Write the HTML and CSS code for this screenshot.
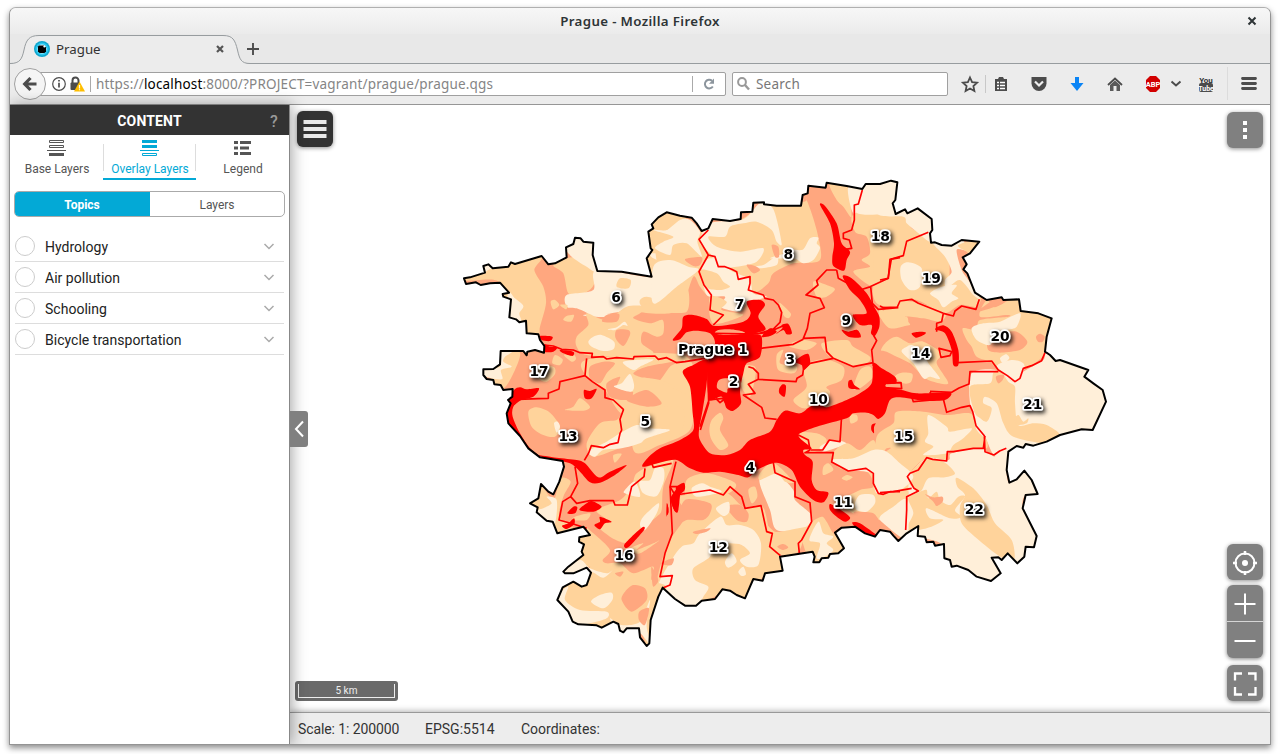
FILE: index.html
```html
<!DOCTYPE html>
<html lang="en">
<head>
<meta charset="utf-8">
<title>Prague</title>
<link rel="stylesheet" href="styles.css">
</head>
<body>
<div class="window">
  <header class="titlebar"><span class="window-title">Prague - Mozilla Firefox</span>
    <svg class="window-close" width="10" height="10" viewBox="0 0 10 10"><path d="M1.5 1.5l7 7M8.500 1.500l-7 7" stroke="#2e3436" stroke-width="2"/></svg>
  </header>
  <div class="tabs">
    <svg class="tab-shape" width="250" height="31" viewBox="0 0 250 31"><path d="M0 29.500C10 29.500 12 25 14 16C16 6 19 1.500 29 1.500H213C223 1.500 225 6 227.500 16C229.500 25 231 29.500 240 29.500H250V31H0z" fill="#ececec"/><path d="M0 29.500C10 29.500 12 25 14 16C16 6 19 1.500 29 1.500H213C223 1.500 225 6 227.500 16C229.500 25 231 29.500 240 29.500H250" fill="none" stroke="#979c9f"/></svg>
    <div class="tab">
      <svg width="16" height="16" viewBox="0 0 16 16"><circle cx="8" cy="8" r="8" fill="#0fa6cd"/><circle cx="8" cy="8" r="6.500" fill="#2cc8f0"/><circle cx="8" cy="8" r="4.500" fill="#e8f8fc"/><path d="M5 4.500h5l2 2v4l-1.500 1.500H5.500L4 10.500v-5z" fill="#000"/><circle cx="10.300" cy="5.500" r="1" fill="#fff"/></svg>
      <span class="tab-name">Prague</span>
      <svg width="8" height="8" viewBox="0 0 8 8"><path d="M1 1l6 6M7 1l-6 6" stroke="#555" stroke-width="2.200"/></svg>
    </div>
    <svg class="new-tab" width="12" height="12" viewBox="0 0 12 12"><path d="M6 0v12M0 6h12" stroke="#4c4c4c" stroke-width="1.900"/></svg>
  </div>
  <div class="toolbar">
    <div class="back"><svg width="16" height="16" viewBox="0 0 16 16"><path d="M14.500 8H3.500M8.500 2L2.700 8l5.800 6" fill="none" stroke="#4c4c4c" stroke-width="3.200"/></svg></div>
    <div class="address">
      <svg width="34" height="16" viewBox="0 0 34 16"><circle cx="7" cy="8" r="6.300" fill="none" stroke="#4c4c4c" stroke-width="1.200"/><path d="M7 6.800v4.700M7 4v1.500" stroke="#4c4c4c" stroke-width="1.700"/><path d="M20.500 7V4.500a3 3 0 0 1 6 0V7" fill="none" stroke="#4c4c4c" stroke-width="2"/><rect x="18.500" y="6.500" width="9" height="7.500" rx="1" fill="#4c4c4c"/><path d="M27.500 5.500L33 15.500H22z" fill="#ffbf00"/><path d="M27.500 9v3.500M27.500 13.300v1" stroke="#fff" stroke-width="1.200"/></svg>
      <span class="address-text">https://<b>localhost</b>:8000/?PROJECT=vagrant/prague/prague.qgs</span>
      <svg class="reload" width="12" height="12" viewBox="0 0 12 12"><path d="M9.800 8.500A4.300 4.300 0 1 1 9 2.800" fill="none" stroke="#8c959d" stroke-width="2"/><path d="M11 .5v5.300H6z" fill="#8c959d"/></svg>
    </div>
    <div class="search"><svg width="13" height="14" viewBox="0 0 13 14"><circle cx="5" cy="5" r="3.900" fill="none" stroke="#999" stroke-width="2"/><path d="M8 8l4 4.500" stroke="#999" stroke-width="2.400"/></svg><span>Search</span></div>
    <svg class="tools" width="305" height="40" viewBox="955 64 305 40">
      <path d="M970 77.500l2.100 4.600 5 .6-3.700 3.400 1 4.900-4.400-2.500-4.400 2.500 1-4.900-3.700-3.400 5-.6z" fill="none" stroke="#4c4c4c" stroke-width="1.800"/>
      <path d="M985.500 75v18" stroke="#c8c8c8"/>
      <path d="M995 79h3l1-2h4l1 2h3v12h-12z" fill="#4c4c4c"/><path d="M997 82.500h2M1000 82.500h5M997 85.500h2M1000 85.500h5M997 88.500h2M1000 88.500h5" stroke="#fff" stroke-width="1.300"/>
      <path d="M1031.500 77h15v6.500a7.500 7.500 0 0 1-15 0z" fill="#4c4c4c"/><path d="M1035 81.500l4 4 4-4" fill="none" stroke="#eee" stroke-width="2.200"/>
      <path d="M1075 77h4v6h4.500l-6.500 8-6.500-8h4.500z" fill="#0a84f5"/>
      <path d="M1108 85l7-6.500 7 6.500" fill="none" stroke="#4c4c4c" stroke-width="1.800"/><path d="M1110 85l5-4.500 5 4.500v6h-3.500v-5h-3v5h-3.500z" fill="#5a5a5a"/>
      <path d="M1150 76h6l4 4v8l-4 4h-6l-4-4v-8z" fill="#d20000"/><text x="1153" y="87" class="abp" text-anchor="middle">ABP</text>
      <path d="M1171.500 81.500l4.500 4 4.500-4" fill="none" stroke="#4c4c4c" stroke-width="2"/>
      <text x="1206" y="82.500" class="you" text-anchor="middle">You</text><rect x="1199" y="83" width="14" height="9" rx="2" fill="#4c4c4c"/><text x="1206" y="90.500" class="tube" text-anchor="middle">Tube</text>
      <path d="M1227.500 67v33" stroke="#dcdcdc"/>
      <path d="M1242.500 78.500h13M1242.500 83.500h13M1242.500 88.500h13" stroke="#4c4c4c" stroke-width="2.800" stroke-linecap="round"/>
    </svg>
  </div>
  <main class="content">
    <aside class="sidebar">
      <div class="heading"><strong>CONTENT</strong><span class="help">?</span></div>
      <nav class="modes">
        <div class="mode"><svg width="20" height="18" viewBox="0 0 20 18"><path d="M2.500 1.500h14v2h-14zM2.500 6.500h14v2h-14z" fill="none" stroke="#555"/><path d="M0 11.500h19" stroke="#555"/><path d="M2 14h15v3H2z" fill="#555"/></svg><span>Base Layers</span></div>
        <div class="mode active"><svg width="20" height="18" viewBox="0 0 20 18"><path d="M2 1h15v3H2zM2 6h15v3H2z" fill="#03a9d6"/><path d="M0 11.500h19M2.500 14.500h14v2h-14z" fill="none" stroke="#03a9d6"/></svg><span>Overlay Layers</span></div>
        <div class="mode"><svg width="20" height="18" viewBox="0 0 20 18"><path d="M1 2h4v3H1zM1 7.500h4v3H1zM1 13h4v3H1zM7 2h11v3H7zM7 7.500h9v3H7zM7 13h11v3H7z" fill="#555"/></svg><span>Legend</span></div>
      </nav>
      <div class="switch"><div class="switch-item selected">Topics</div><div class="switch-item">Layers</div></div>
      <ul class="topics">
        <li><i class="radio"></i><span>Hydrology</span><svg width="12" height="8" viewBox="0 0 12 8"><path d="M1.500 2l4.500 4.500 4.500-4.500"/></svg></li>
        <li><i class="radio"></i><span>Air pollution</span><svg width="12" height="8" viewBox="0 0 12 8"><path d="M1.500 2l4.500 4.500 4.500-4.500"/></svg></li>
        <li><i class="radio"></i><span>Schooling</span><svg width="12" height="8" viewBox="0 0 12 8"><path d="M1.500 2l4.500 4.500 4.500-4.500"/></svg></li>
        <li><i class="radio"></i><span>Bicycle transportation</span><svg width="12" height="8" viewBox="0 0 12 8"><path d="M1.500 2l4.500 4.500 4.500-4.500"/></svg></li>
      </ul>
    </aside>
    <section class="map-column">
      <div class="map">
        <svg class="city" width="680" height="480" viewBox="0 0 2040 1440">
          <defs><clipPath id="city-clip"><use href="#outline"/></clipPath></defs>
          <g clip-path="url(#city-clip)"><rect width="2040" height="1440" fill="#ffa77f"/><g id="zones"></g></g>
          <g class="borders">
            <path d="M313 525L340 528 365 538 400 540 420 548 457 550 455 562 490 560 500 567 530 563 580 567 582 560 645 558 655 568 680 563 710 578 735 575 795 565M440 565l-2 18-3 34-42 10-33 8-3 22-32 13v15l-30 1-60 2M435 617l22 18 38 25v23l25 7 30 28 0 2-10 28 5 32-5 10-6 28-24 5-20 10-36-6-8 22-13 22M405 890l8 50-21 40 18 20 40-8 70 0 5 13h37l13-55 37-30 3-25M392 980l-24 15-11 55 43 12 40 13M708 875l-18 75 7 140-22 60-15 70 37-3-7 28-20 8M690 950l28 0M635 880l5 12 55-12"/>
            <g transform="translate(660 0)"><path d="M145 180l-28 28 28 47 20 5 10 30 20 0 20 8 15 7 5 23 35-8 0 20-5 20 45 15 5 10 25 5 15 15 10 22-5 30-20 20-48 15-130-2M145 255l-28 50 15 40 22 30-4 45 40 15-30 30M607 60l-12 42-12 3v45l-8 30-25 10v15l18 5 7 25-20 3M530 300h-30l-30 32 4 13-36 30 42 10 13 28-43 17-8 45-12 30 65-3 5 43 20 20 60 25 60-12M530 300l5 25 65 35 32-10 5 50 18 18 60-5M630 350l55-25 5-57 30-5M430 508l-30 15-97 12M640 495l10 17-15 28 5 48M520 565l-70 15-20 20-2 15-17 10-3 10-113-7 0-18-15-15-15-5M295 628l-30 15 20 27-35 5 55 37 10 32 35 4M143 570l3 130-25 80M154 570l-6 120 40-5 10 15M160 498h70l35-4 60-7 45-20M590 680l30-5 35-50M590 680v25l-30 5"/></g>
            <g transform="translate(1320 0)"><path d="M145 187l-65 27-10 43-36 10-10 58-24 5M0 408l10 5 42-2 8-18 35-5 20 12 75 30 30 8 5-15 20-15 43 10 10-30M190 430l-5 25-15 5 0 25M177 535l38 10-5 12-27 5zM232 578l103-5 20 27 27 17 23 18 15-10 10-30 25-8 30-15 10-24M355 605l-85 0-3 37-30 12-22 13-65-3M150 665l3 10 60-5M20 640l43-2 2 18-55-3M95 680l5 15 90-8 10 40 45-15 25-5 8 18 10 42 25 30 2 48 27 10 17-12 20-8M315 798l-5 37-30 0-60 10-18 0-2 28-42-5-18-5-25 37-25 10-8 10 20 35 13 8-35 17 0 40-3 60M95 955l-55 10-40 3"/></g>
            <g transform="translate(660 690)"><path d="M720 275l-30 0-20 8-15-3-15-30 0-30-22-15-53 8-50-27 5-28-85 0 15-8-5-30-30-15M545 45l-5 80-32-5-20 30-35 0M340 188l5 30 60 27 0 45 45 18 5 57-30 55-10 10 3 30M30 260l15 25 105-15 40 15 20-25 35 30 10 35 48-8 17 78 17 5-8 40 32 27M120 80l25-75M190 0l-10 8-12-12"/></g>
          </g>
          <path id="outline" class="outline" d="M72 325L78 342 108 337 122 345 150 340 180 338 207 368 188 372 190 380 213 388 208 442 228 448 238 457 258 452 260 490 295 493 300 510 313 528 312 548 285 540 262 545 260 556 250 543 182 543 180 583 160 597 130 598 130 615 140 627 160 630 163 643 182 645 190 660 218 657 217 680 204 690 212 700 200 730 205 760 240 798 265 835 300 862 368 873 372 890 358 935 340 973 325 965 303 942 295 985 270 1000 293 1012 290 1027 320 1052 338 1055 352 1090 430 1070 450 1095 418 1102 417 1115 432 1123 425 1145 430 1155 385 1190 370 1205 375 1210 400 1210 440 1193 453 1208 440 1245 425 1250 400 1235 368 1252 352 1290 385 1325 398 1355 415 1363 470 1366 485 1373 520 1355 535 1362 540 1382 550 1387 560 1375 597 1375 600 1402 620 1428 628 1420 632 1350 655 1280 668 1253 705 1287 735 1307 768 1307 785 1292 825 1287 847 1258 870 1262 890 1275 915 1285 930 1250 940 1227 968 1232 975 1210 1028 1202 1020 1160 1118 1145 1124 1160 1120 1177 1138 1177 1145 1165 1165 1163 1170 1152 1195 1150 1212 1135 1185 1088 1205 1073 1245 1070 1275 1090 1305 1100 1320 1080 1350 1085 1360 1097 1375 1113 1400 1090 1435 1068 1433 1098 1455 1100 1460 1117 1480 1115 1485 1127 1512 1122 1513 1165 1530 1170 1535 1190 1550 1187 1585 1200 1610 1220 1653 1233 1682 1210 1655 1163 1675 1162 1685 1170 1703 1150 1732 1180 1753 1160 1757 1130 1782 1132 1790 1098 1748 1015 1757 975 1793 972 1775 930 1753 902 1730 928 1708 938 1700 900 1705 845 1730 828 1750 833 1757 822 1780 827 1820 815 1860 795 1925 778 1958 780 1998 695 1988 660 1960 640 1933 620 1945 600 1860 570 1847 573 1830 555 1815 545 1820 500 1835 445 1795 430 1742 423 1737 388 1690 390 1685 382 1640 390 1605 368 1582 310 1570 298 1580 283 1568 262 1590 250 1618 215 1565 210 1535 227 1505 225 1485 217 1473 218 1470 190 1477 180 1475 147 1433 115 1402 130 1395 118 1367 132 1358 100 1366 90 1372 37 1353 32 1320 42 1277 42 1267 57 1220 48 1160 38 1157 53 1105 47 1103 70 1088 75 1083 107 1010 107 972 103 972 97 940 98 937 125 903 127 902 147 870 153 818 147 805 175 785 183 770 160 755 143 720 137 680 127 655 142 635 163 640 175 625 185 632 235 637 240 620 265 635 320 545 305 472 303 458 255 460 218 430 215 422 205 405 203 400 222 378 232 380 262 345 280 325 283 305 258 225 282 213 277 205 290 158 295 145 283 130 288 135 308 90 322z"/>
          <g class="labels">
            <text x="528" y="396">6</text><text x="297" y="619">17</text><text x="1045" y="267">8</text><text x="1321" y="214">18</text><text x="1474" y="339">19</text><text x="899" y="417">7</text><text x="1219" y="465">9</text><text x="1680" y="513">20</text><text x="819" y="553">Prague 1</text><text x="1051" y="583">3</text><text x="1442" y="563">14</text><text x="881" y="648">2</text><text x="1135" y="703">10</text><text x="1778" y="718">21</text><text x="616" y="769">5</text><text x="384" y="812">13</text><text x="1391" y="813">15</text><text x="931" y="906">4</text><text x="1210" y="1011">11</text><text x="1603" y="1033">22</text><text x="835" y="1145">12</text><text x="552" y="1170">16</text>
          </g>
        </svg>
        <div class="map-button menu"><svg width="36" height="36" viewBox="0 0 36 36"><path d="M6.500 11h23M6.500 18h23M6.500 25h23" stroke="#e9e9e9" stroke-width="4"/></svg></div>
        <div class="collapse"><svg width="18" height="36" viewBox="0 0 18 36"><path d="M13 10.500L6 18l7 7.500" fill="none" stroke="#fff" stroke-width="2"/></svg></div>
        <div class="map-button more"><svg width="36" height="36" viewBox="0 0 36 36"><path d="M16 9h4v4h-4zM16 16h4v4h-4zM16 23h4v4h-4z" fill="#fff"/></svg></div>
        <div class="controls">
          <div class="map-button"><svg width="36" height="36" viewBox="0 0 36 36"><circle cx="18" cy="19" r="9.500" fill="none" stroke="#fff" stroke-width="2"/><circle cx="18" cy="19" r="3" fill="#fff"/><path d="M18 7v4M18 27v4M6 19h4M26 19h4" stroke="#fff" stroke-width="2.500"/></svg></div>
          <div class="zoom"><svg width="36" height="73" viewBox="0 0 36 73"><path d="M0 36.500h36" stroke="#d5d5d5"/><path d="M7.500 19h21M18 8.500v21M7.500 56h21" stroke="#fff" stroke-width="2"/></svg></div>
          <div class="map-button"><svg width="36" height="36" viewBox="0 0 36 36"><path d="M8 15.500V8.500h7M21 8.500h7.500v7M28.500 22v7.500H21M15 29.500H8V22" fill="none" stroke="#fff" stroke-width="2.300"/></svg></div>
        </div>
        <div class="scale"><div class="scale-line">5 km</div></div>
      </div>
      <footer class="status"><span class="st-scale">Scale: 1: 200000</span><span class="st-epsg">EPSG:5514</span><span>Coordinates:</span></footer>
    </section>
  </main>
</div>
<script src="map.js"></script>
</body>
</html>
```
FILE: styles.css
```css
* { box-sizing: border-box; }
body { margin: 0; height: 754px; padding: 7px 9px 9px; background: #fff; overflow: hidden; font-family: Roboto, sans-serif; color: #222; }
svg { display: block; flex: none; }
.window { width: 1262px; height: 738px; border: 1px solid #949494; border-top-color: #b0b0b0; border-radius: 7px 7px 0 0; overflow: hidden; display: flex; flex-direction: column; box-shadow: 0 3px 6px rgba(0,0,0,.45); background: #ececec; }
.titlebar { position: relative; height: 26px; flex: none; background: linear-gradient(#f7f7f7, #ebebeb); display: flex; align-items: center; justify-content: center; font: 600 13.3px "Noto Sans", sans-serif; color: #2e3436; }
.window-title { letter-spacing: .35px; }
.window-close { position: absolute; right: 13px; top: 8px; }
.tabs { position: relative; height: 30px; flex: none; background: #e8e8e8; border-bottom: 1px solid #979c9f; display: flex; align-items: center; font: 13.3px "Noto Sans", sans-serif; color: #333; }
.tab-shape { position: absolute; left: 0; top: 0; }
.tab { position: relative; display: flex; align-items: center; width: 236px; padding-left: 24px; padding-right: 22px; padding-top: 1px; }
.tab-name { margin-left: 6px; flex: 1; }
.new-tab { position: relative; margin: 1px 0 0 1px; }
.toolbar { height: 41px; flex: none; border-bottom: 1px solid #969696; display: flex; align-items: center; font: 13.5px "Noto Sans", sans-serif; }
.back { position: relative; z-index: 1; width: 32px; height: 32px; margin-left: 4px; border: 1px solid #a0a0a0; border-radius: 50%; background: #f5f5f5; display: flex; align-items: center; justify-content: center; flex: none; }
.address { margin-left: -7px; width: 687px; height: 24px; border: 1px solid #a0a0a0; border-radius: 2px; background: #fff; display: flex; align-items: center; padding-left: 12px; flex: none; }
.address-text { margin-left: 4px; width: 603px; height: 16px; border-left: 1px solid #aaa; border-right: 1px solid #aaa; display: flex; align-items: center; padding-left: 5px; color: #858585; white-space: nowrap; letter-spacing: .17px; }
.address-text b { color: #000; font-weight: 400; }
.reload { margin-left: 10px; }
.search { margin-left: 6px; width: 216px; height: 24px; border: 1px solid #a0a0a0; border-radius: 2px; background: #fff; display: flex; align-items: center; padding-left: 4px; gap: 6px; color: #777; flex: none; font-size: 13.5px; letter-spacing: .2px; }
.tools { margin-left: 7px; }
.abp { font: 700 7.500px Roboto, sans-serif; fill: #fff; }
.you { font: 700 8px Roboto, sans-serif; fill: #333; }
.tube { font: 700 7px Roboto, sans-serif; fill: #fff; }
.content { flex: 1; display: flex; min-height: 0; background: #fff; }
.sidebar { position: relative; z-index: 2; width: 280px; flex: none; background: #fff; border-right: 1px solid #888; box-shadow: 2px 0 14px rgba(0,0,0,.35); }
.heading { position: relative; height: 30px; background: #333; color: #fff; display: flex; align-items: center; justify-content: center; font-size: 14px; padding-top: 2px; letter-spacing: .15px; }
.help { position: absolute; right: 11px; color: #999; font-size: 16px; font-weight: 500; }
.modes { display: flex; height: 45px; }
.mode { position: relative; width: 93px; flex: 1; display: flex; flex-direction: column; align-items: center; padding-top: 4px; font-size: 12px; color: #555; gap: 5px; white-space: nowrap; }
.mode span { line-height: 14px; padding-left: 1px; }
.mode.active { color: #03a9d6; background: linear-gradient(#ddd, #ddd) 0 9px / 1px 27px no-repeat, linear-gradient(#ddd, #ddd) 100% 9px / 1px 27px no-repeat; border-bottom: 2px solid #03a9d6; }
.switch { margin: 11px 4px 0; height: 26px; display: flex; border: 1px solid #aaa; border-radius: 5px; overflow: hidden; font-size: 12px; color: #555; }
.switch-item { flex: 1; display: flex; align-items: center; justify-content: center; padding-top: 1px; }
.switch-item.selected { flex: 0 0 136px; background: #03a9d6; color: #fff; font-weight: 700; margin: -1px 0 -1px -1px; }
.topics { list-style: none; margin: 14px 5px 0; padding: 0; font-size: 14px; letter-spacing: .02px; }
.topics li { height: 31px; border-bottom: 1px solid #ddd; display: flex; align-items: center; padding-right: 9px; }
.topics span { flex: 1; margin-left: 10px; padding-top: 1px; }
.radio { width: 20px; height: 20px; border: 1px solid #ccc; border-radius: 50%; }
.topics path { fill: none; stroke: #aaa; stroke-width: 1.500; }
.map-column { flex: 1; min-width: 0; display: flex; flex-direction: column; }
.map { position: relative; flex: 1; background: #fff; }
.city { position: absolute; left: 150px; top: 65px; }
.outline { fill: none; stroke: #000; stroke-width: 6; stroke-linejoin: round; }
.borders { fill: none; stroke: #f00; stroke-width: 5; stroke-linejoin: round; }
.labels { font: 700 41.500px "DejaVu Sans", sans-serif; text-anchor: middle; fill: #000; stroke: #fff; stroke-width: 11; stroke-linejoin: round; paint-order: stroke; filter: drop-shadow(6px 7px 6px rgba(0,0,0,.85)); }
.map-button { width: 36px; height: 36px; background: #808080; border-radius: 6px; box-shadow: 0 1px 4px rgba(0,0,0,.45); }
.menu { position: absolute; left: 7px; top: 6px; background: #333; }
.more { position: absolute; right: 7px; top: 7px; }
.collapse { position: absolute; left: 0; top: 306px; width: 18px; height: 36px; z-index: 3; background: #808080; border-radius: 0 3px 3px 0; }
.controls { position: absolute; right: 7px; top: 439px; display: flex; flex-direction: column; gap: 5px; }
.zoom { height: 73px; margin-bottom: 2px; background: #808080; border-radius: 6px; box-shadow: 0 1px 4px rgba(0,0,0,.5); }
.scale { position: absolute; left: 5px; top: 576px; width: 103px; height: 20px; background: #6a6a6a; border-radius: 3px; padding: 3px; }
.scale-line { height: 14px; border: 1px solid #eee; border-top: 0; color: #eee; font-size: 10px; line-height: 13px; text-align: center; }
.status { position: relative; height: 32px; flex: none; border-top: 1px solid #999; background: #ededed; box-shadow: 0 -1px 6px rgba(0,0,0,.3); display: flex; align-items: center; padding: 1px 0 0 8px; font-size: 14px; color: #333; }
.st-scale { width: 127px; letter-spacing: -.1px; }
.st-epsg { width: 96px; }
```
FILE: map.js
```js
// Land-use zones: t = tan, c = cream, s = salmon, r = red.
// Each sheet has an origin and a list of closed rings, smoothed when drawn.
const colors = { t: '#ffd39b', c: '#ffefd9', s: '#ffa77f', r: '#ff0000' };
const sheets = [
[0, 0, `
t 72 330 140 270 300 258 283 300 310 350 318 400 300 470 290 500 200 480 180 338
c 205 368 225 385 250 408 238 430 243 455 200 445
c 125 280 215 280 150 298 135 305
t 340 285 400 262 470 300 458 350 420 375 385 370 370 310
c 375 230 405 195 470 218 475 305 440 290 395 260
c 470 300 640 322 720 290 740 370 690 395 620 400 590 415 540 425 460 437 440 428 410 415 380 410 380 375 460 360
c 430 435 500 430 520 440 460 440
t 625 170 700 155 690 200 720 240 740 300 635 320
c 635 150 680 120 730 140 700 160 650 162
c 635 250 700 255 720 280 700 290 640 265
t 440 430 500 450 560 410 620 410 600 430 580 445 630 460 668 450 670 490 650 500 610 485 605 520 640 550 560 560 440 555 410 530 410 500 445 465
s 530 480 565 480 570 495 550 528 527 505
s 487 455 500 435 537 432 530 455
c 445 515 460 500 485 495 522 515 520 538 490 543 455 530
t 370 450 380 438 402 435 393 455
t 332 395 345 390 358 405 340 418
t 360 405 382 405 378 418
t 540 325 572 330 565 355 530 350
c 503 478 530 472 553 455 563 468 550 465 525 480
t 600 390 620 380 680 390 740 350 740 425 650 422 605 408
t 200 540 240 548 225 600 190 655 150 615
c 180 540 218 543 195 560 190 575 215 590 183 600 185 628 120 615 130 590 180 590
t 290 590 340 590 345 612 320 635 295 625
t 345 555 368 568 360 585 337 580
t 372 555 400 553 408 567 395 575
t 445 568 740 560 740 740 560 740 495 660 440 620
s 450 590 490 575 525 580 500 610 480 640 450 625
s 580 610 620 590 720 573 690 590 650 640 610 625
s 640 668 670 700 670 740 590 740 620 700
s 500 640 540 620 530 650 550 660 590 670 560 690 510 680
c 522 650 545 640 570 612 583 650 570 665
c 610 655 640 660 630 688 620 670
c 550 575 640 568 600 590 580 600
r 300 498 337 500 330 513 305 510
r 313 523 330 530 352 532 340 545 313 545
r 360 540 400 545 397 558 370 550
r 222 660 240 652 260 658 297 655 280 680 240 692 205 720 205 695
r 432 660 450 663 470 657 455 685 435 685
`],
[660, 0, `
t -20 140 60 130 120 185 240 150 310 105 430 95 440 90 470 180 480 270 400 280 340 310 325 340 280 370 200 370 150 380 120 350 100 320 70 400 30 430 -60 425 -40 400 0 380
c -20 180 20 180 60 150 90 150 120 185 112 215 125 260 80 220 40 225 30 255 -15 235 10 215 40 200
c -20 290 30 270 85 290 115 300 50 350 -20 400
t 0 160 40 155 20 180 -10 175
c 150 160 250 148 300 100 340 118 365 220 350 215 335 180 290 155 250 160 210 170 195 200 145 200 170 230 240 245 310 235 290 275 230 290 180 290 150 250 120 215
c 270 290 310 285 350 258 350 285 300 295
c 330 265 375 250 400 240 430 238 450 205 475 203 470 220 480 235 460 270 430 280 400 265
c 125 290 150 265 190 275 210 300 230 310 270 330 280 370 320 380 260 400 240 425 180 410 195 380 140 375
t 122 300 170 310 190 335 210 350 180 360 140 352
t 150 380 200 395 185 420 250 435 160 460
s 260 285 285 288 300 300 280 310
s 75 268 125 262 120 285 100 288
s 335 225 355 230 357 260 345 260
t 508 40 560 45 575 140 550 110 530 90
c 565 50 615 55 590 130 575 120
t 585 130 740 110 740 290 690 260 690 320 640 350 580 305 630 290 605 270 630 250 620 200 585 185
c 610 45 690 25 720 70 700 125 590 128
c 645 178 680 165 700 195 685 215 680 250 655 225
t 640 350 660 330 690 320 740 290 740 410 660 405 640 380
t 460 335 500 345 525 358 500 380 470 380
t 485 520 560 510 580 530 630 560 620 580 580 590 510 560
t 430 590 490 568 550 590 545 630 500 650 510 665 500 700 470 705 430 715 400 690 440 650
t 350 555 370 540 360 580 410 590 400 610 355 600
t 358 398 392 430 385 445 370 435
t 660 415 700 450 740 440 740 465 690 475 660 440
t 390 520 430 510 470 520 440 540 390 530
t 580 655 600 600 630 590 640 620 600 655
t 250 590 285 590 285 625 270 680 245 650
t -60 640 0 630 50 655 90 700 100 750 -60 800
r 480 104 495 108 530 160 545 220 570 245 560 270 552 302 520 288 517 260 522 220 510 160
r 548 318 575 325 620 370 645 415 658 440 658 470 645 497 633 490 635 465 600 465 578 435 620 430 600 390 570 360
r 545 480 565 485 592 480 602 502 565 500
r 70 440 100 435 140 447 165 468 250 455 272 430 260 395 300 390 315 405 295 440 317 478 280 492 305 500 300 560 260 580 250 610 240 660 243 700 220 722 200 715 185 680 150 690 142 640 145 570 165 520 150 490 110 482 80 487 60 508 38 510 65 475
r 305 500 330 475 350 485 330 498
s 175 480 210 478 250 485 250 492 190 495 165 490
s 175 632 195 625 235 625 240 650 205 655 200 668 172 655
r 348 492 367 475 365 465 385 462 396 490 380 493 370 480
r 405 575 425 558 445 552 450 580 430 600 425 585
r 358 655 368 643 378 648 374 680 358 670
r 565 635 575 630 583 645 600 658 568 655
`],
[1320, 0, `
t 0 140 60 135 95 175 150 205 205 270 210 330 240 320 300 375 290 410 240 405 190 430 110 390 50 405 -10 390 -20 200
c -10 30 60 20 45 100 113 110 165 147 155 215 110 185 80 160 70 140 -10 130
c 155 210 240 205 260 240 230 240 245 300 265 330 300 385 280 375 240 330 200 355 195 330 215 305 195 260
t 235 225 310 205 270 250 260 245
c 62 290 85 277 125 295 120 350 90 360 65 330
c 150 370 185 350 230 345 215 370 235 385 215 395 190 412 175 390
t 320 390 345 412 400 385 430 400 425 425 520 435 495 550 430 595 350 590 330 575 290 560 275 530 260 510 248 475 290 480 300 450 385 440 380 435 300 440
s 310 410 365 375 375 395 340 412 280 430
s 325 510 360 490 410 485 442 515 420 540 360 548 325 540
s 468 500 480 491 494 500 488 515 474 515
c 275 475 310 460 360 455 420 430 410 470 380 480 350 490 330 525 290 510
c 360 565 378 553 388 565 370 580
c 350 590 395 570 430 580 430 605 400 635
t 0 430 60 395 120 400 195 430 180 455 130 445 75 440 90 465 40 465 10 450
t 3 540 20 515 50 500 90 520 130 515 185 550 170 580 205 640 160 635 130 620 90 580 50 560 20 545
c 65 545 80 530 95 525 125 540 155 545 140 570 180 625 150 620 130 625 100 580
t 45 620 65 608 97 612 92 637 70 640
r 165 478 190 466 215 485 235 540 235 585 220 585 215 540 195 490
r 95 490 120 485 138 488 125 498 107 503
c 275 610 350 600 400 635 430 605 490 570 505 540 620 590 700 665 690 700 640 800 500 825 385 850 345 860 315 800 290 760 270 700
t 270 650 330 640 340 608 360 600 385 635 405 650 405 700 415 765 460 760 500 765 540 795 500 820 400 800 370 760 350 700 315 680 310 700 335 715 320 755 285 730
s 348 620 372 615 368 630 355 640
`],
[1320, 660, `
t -10 240 -10 140 40 100 50 65 130 65 200 75 270 70 300 110 320 175 205 185 200 215 140 205 90 250 100 300 0 305 40 280 20 235 70 225 75 190 20 175
c 145 75 200 110 210 125 275 115 250 145 220 165 200 190 130 195 160 170 135 155 145 130
c -10 200 15 215 20 245 45 255 40 285 -10 295
c 290 80 320 100 370 130 330 150 290 120
c 85 260 140 205 205 210 215 190 300 175 345 200 400 180 380 240 390 280 435 230 490 312 437 315 430 355 480 438 440 530 333 585 200 525 185 462 115 440 70 420 85 320
t 230 263 280 295 320 345 345 400 395 450 402 510 360 500 290 445 245 400 240 350 255 315 232 290
t 402 90 415 75 430 95 445 85 440 100 415 105
t 135 210 190 215 225 250 195 262 145 265 120 305 80 265
t 85 325 120 305 140 300 145 325 170 305 180 330 210 345 235 320 255 320 225 360 245 380 210 385 140 355 150 385 190 390 140 415 80 420 100 370
c 170 280 190 290 220 275 228 290 205 320 170 295
s 135 312 160 322 187 320 188 335 170 348 160 335
t -10 325 40 315 80 340 20 360 75 360 80 400 40 390 -10 370
`],
[660, 690, `
t -70 -60 50 -30 95 0 100 60 80 100 0 135 -80 150
c -20 85 25 90 0 103 -20 102
t 148 90 155 60 180 38 190 55 180 90 205 135 180 150 155 120
t 80 240 140 220 220 245 225 265 190 285 120 270 80 300
t 60 290 190 275 250 320 308 320 330 400 365 480 375 520 310 530 255 605 190 580 110 620 60 620 -10 570 20 440 65 370 80 340
s 75 300 150 310 150 340 130 360 80 360 50 375
s 200 320 240 315 265 340 260 365 230 360
c 35 480 65 440 100 430 120 400 180 350 200 375 240 375 280 390 303 430 295 495 260 500 240 480 270 460 245 435 210 430 160 430 150 470 100 505 105 540 145 560 130 590 110 620 60 620 -5 565
c 95 265 125 250 150 260 185 275 110 290
c 168 325 205 305 208 335 190 348
c 195 485 215 460 230 485 205 503
c 235 515 250 500 258 523 245 528
s 100 395 150 385 140 395 110 402
s 0 490 40 475 35 495 15 495
t 265 270 285 260 292 290 275 310
c 298 240 340 215 365 230 400 270 405 300 450 340 455 365 430 390 350 390 330 330
t 300 220 340 188 400 245 375 245 350 220 300 240
t 310 365 345 395 390 390 450 380 435 405 415 455 365 465 330 430
s 352 440 370 432 385 442 370 450
t 425 410 450 370 485 350 500 365 520 400 560 445 500 480 455 490
c 475 365 490 400 520 410 500 430 520 450 495 470 470 475 480 430 448 420
t 418 100 470 100 500 120 480 150 435 155
c 480 140 520 120 560 130 525 145 490 155
t 570 45 590 45 592 62 572 70
t 490 200 505 190 520 210 490 225
t 545 235 560 225 578 232 560 242
t 520 160 560 130 600 150 640 120 665 160 740 130 740 330 700 360 660 360 620 360 540 310 600 270 640 260 620 215 540 205
s 580 340 600 335 640 340 660 370 650 400 600 380
c 515 180 580 175 640 150 680 155 720 190 760 230 720 270 650 280 635 220 560 210
c 585 310 600 285 640 285 645 310 620 335 590 330
c 660 350 700 320 740 300 740 415 670 370
r 510 312 535 325 570 352 555 365 530 350 510 330
r 577 367 600 370 655 410 625 405 585 380
r 635 75 647 70 642 82 642 100 634 90
r 48 262 72 248 74 270 55 290 48 335 38 320 34 290 50 285
r 20 310 25 325 20 350
`],
[0, 690, `
t 265 35 290 22 330 38 360 80 345 110 310 105 275 80
c 342 70 353 65 360 80 350 98
t 375 30 400 20 420 -5 450 20 430 32
t 440 130 480 70 530 60 560 40 720 20 720 100 620 145 590 135 540 145 460 170
s 560 0 620 20 665 10 620 -30
c 450 150 500 125 540 100 590 75 620 85 690 90 620 115 600 130 545 145 490 150 465 170 445 160
t 520 165 545 162 525 188
t 262 310 290 240 340 300 360 235 392 245 370 290 358 350 400 385 350 410 310 370
c 320 290 350 300 345 370 320 370 285 335 310 325 335 310
t 430 380 460 400 510 450 488 480 500 490 540 490 580 520 640 500 635 540 680 560 650 600 625 750 590 690 400 680 340 600 400 540 450 500 360 525 420 460 410 420
c 360 580 385 560 375 600 420 630 500 635 500 655 450 670 385 680 350 610
c 453 605 480 585 515 578 517 600 490 625
c 365 510 420 480 450 505 500 520 520 508 490 533 450 515 375 525
c 510 655 545 675 600 665 630 600 620 680 640 750 600 700 540 700
s 545 600 555 575 580 555 615 565 620 600 575 635
s 598 635 627 625 615 675 597 660
s 525 520 550 515 540 530
s 635 500 655 540 640 560 635 530
t 590 220 650 190 700 180 670 260 665 330 650 350 600 390 580 425 550 428 510 410 470 375 500 360 470 330 540 300 575 260
c 598 245 630 240 645 205 670 205 672 240 650 288 610 280
c 555 270 585 245 600 290 555 280
c 600 375 610 350 655 310 650 340 615 390
t 405 350 450 340 440 360 400 360
t 580 440 610 430 590 450 640 430 660 420 600 460 570 450
r 290 165 350 173 410 180 435 190 475 232 510 215 560 195 525 225 480 248 450 247 420 215 390 190 340 180
r 200 -20 245 -15 220 20 218 50 240 100 270 145 300 170 280 170 235 115 195 60
r 382 340 400 320 412 322 405 340
r 418 330 440 310 455 303 485 320 460 335
r 463 375 480 365 480 350 515 365 495 370 480 388
r 366 378 385 370 402 355 403 372 380 387
r 554 432 605 383 612 390 565 442
r 680 345 682 310 686 335
r 692 295 720 260 715 330 706 335
`],
[660, 690, `
r -52 200 -35 172 0 145 60 120 100 90 98 40 90 -40 68 -85 100 -105 142 -120 140 -50 128 30 117 90 120 120 150 160 200 165 240 150 270 120 330 95 350 60 375 32 420 40 450 20 480 10 500 22 560 0 600 -20 635 -50 640 -110 665 -95 705 -70 708 -50 680 -48 680 -38 725 -30 770 -20 870 -22 855 0 790 2 720 -8 690 0 675 40 655 57 640 45 620 38 580 40 560 55 470 80 420 100 420 115 455 145 430 150 435 165 458 185 455 240 470 270 505 278 490 307 460 300 420 260 395 210 350 188 300 205 265 232 235 225 180 215 130 218 90 205 50 180 10 185
`]];
// Catmull-Rom ring to cubic Bezier path.
function ring(n) {
  const p = [];
  for (let i = 0; i < n.length; i += 2) p.push([n[i], n[i + 1]]);
  const at = i => p[(i + p.length) % p.length];
  let d = `M${p[0]}`;
  p.forEach((b, i) => {
    const a = at(i - 1), c = at(i + 1), e = at(i + 2), k = 7;
    d += `C${b[0] + (c[0] - a[0]) / k} ${b[1] + (c[1] - a[1]) / k} ${c[0] - (e[0] - b[0]) / k} ${c[1] - (e[1] - b[1]) / k} ${c[0]} ${c[1]}`;
  });
  return d + 'z';
}
document.getElementById('zones').innerHTML = sheets.map(([x, y, rows]) =>
  `<g transform="translate(${x} ${y})">` + rows.trim().split('\n').map(row => {
    const [key, ...n] = row.trim().split(/\s+/);
    return `<path fill="${colors[key]}" d="${ring(n.map(Number))}"/>`;
  }).join('') + '</g>').join('');
```
